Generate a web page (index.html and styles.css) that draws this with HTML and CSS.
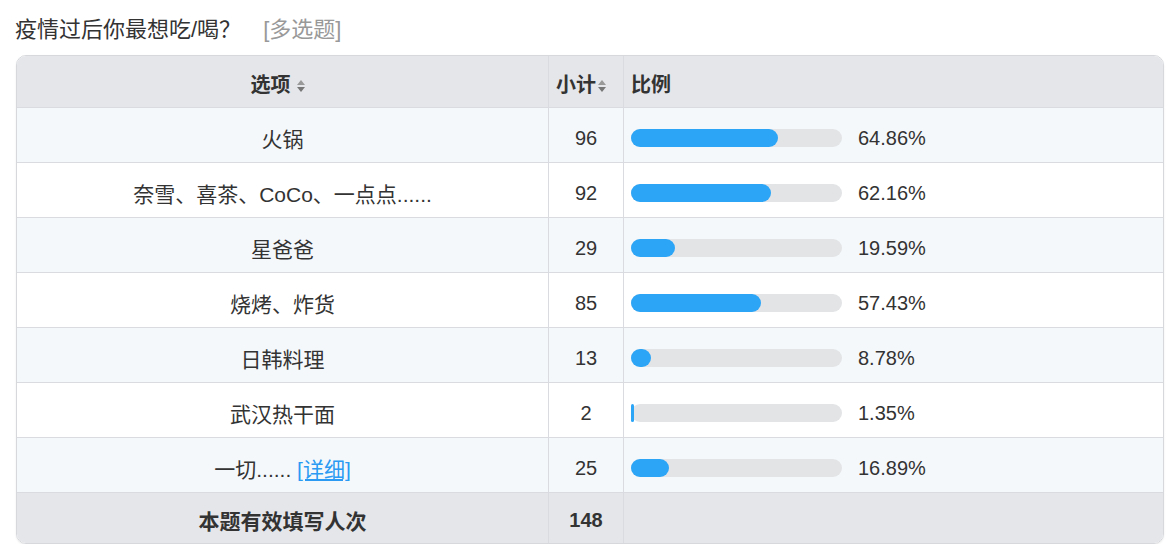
FILE: index.html
```html
<!DOCTYPE html>
<html lang="zh-CN">
<head>
    <meta charset="UTF-8">
    <title>疫情过后你最想吃/喝？</title>
    <link rel="stylesheet" href="styles.css">
</head>
<body>
    <div class="question">
        <div class="question-title">疫情过后你最想吃/喝？<span class="question-type">[多选题]</span></div>

        <div class="result-box">
            <table class="result-table">
                <thead>
                    <tr>
                        <th class="col-option">选项<span class="sort"></span></th>
                        <th class="col-count">小计<span class="sort"></span></th>
                        <th class="col-ratio">比例</th>
                    </tr>
                </thead>
                <tbody>
                    <tr>
                        <td class="opt">火锅</td>
                        <td class="num">96</td>
                        <td><div class="ratio"><div class="bar"><div class="fill" style="width: 147px"></div></div><span class="pct">64.86%</span></div></td>
                    </tr>
                    <tr>
                        <td class="opt">奈雪、喜茶、CoCo、一点点......</td>
                        <td class="num">92</td>
                        <td><div class="ratio"><div class="bar"><div class="fill" style="width: 140px"></div></div><span class="pct">62.16%</span></div></td>
                    </tr>
                    <tr>
                        <td class="opt">星爸爸</td>
                        <td class="num">29</td>
                        <td><div class="ratio"><div class="bar"><div class="fill" style="width: 44px"></div></div><span class="pct">19.59%</span></div></td>
                    </tr>
                    <tr>
                        <td class="opt">烧烤、炸货</td>
                        <td class="num">85</td>
                        <td><div class="ratio"><div class="bar"><div class="fill" style="width: 130px"></div></div><span class="pct">57.43%</span></div></td>
                    </tr>
                    <tr>
                        <td class="opt">日韩料理</td>
                        <td class="num">13</td>
                        <td><div class="ratio"><div class="bar"><div class="fill" style="width: 20px"></div></div><span class="pct">8.78%</span></div></td>
                    </tr>
                    <tr>
                        <td class="opt">武汉热干面</td>
                        <td class="num">2</td>
                        <td><div class="ratio"><div class="bar"><div class="fill" style="width: 3px"></div></div><span class="pct">1.35%</span></div></td>
                    </tr>
                    <tr>
                        <td class="opt">一切...... <a href="#">[详细]</a></td>
                        <td class="num">25</td>
                        <td><div class="ratio"><div class="bar"><div class="fill" style="width: 38px"></div></div><span class="pct">16.89%</span></div></td>
                    </tr>
                </tbody>
                <tfoot>
                    <tr>
                        <td class="opt">本题有效填写人次</td>
                        <td class="num">148</td>
                        <td></td>
                    </tr>
                </tfoot>
            </table>
        </div>
    </div>
</body>
</html>
```

FILE: styles.css
```css
/* Page base */
html, body {
    margin: 0;
    padding: 0;
    background: #fff;
    color: #333;
    font-family: "Liberation Sans", "Noto Sans CJK SC", sans-serif;
}

.question {
    padding: 15px 12px 0 15px;
}

.question-title {
    font-size: 22px;
    line-height: 30px;
    margin-bottom: 10px;
    color: #333;
}

.question-type {
    color: #999;
    margin-left: 22px;
}

/* Rounded box around the table */
.result-box {
    width: 1146px;
    margin-left: 1px;
    border: 1px solid #d6d8dc;
    border-radius: 10px;
    overflow: hidden;
    box-shadow: 0 1px 2px rgba(0, 0, 0, 0.08);
}

.result-table {
    width: 100%;
    border-collapse: collapse;
    font-size: 20px;
    color: #333;
}

.result-table th,
.result-table td {
    border-left: 1px solid #d9dbe0;
    border-top: 1px solid #d9dbe0;
    text-align: center;
    vertical-align: middle;
    padding: 0 7px;
}

.result-table th:first-child,
.result-table td:first-child {
    border-left: none;
}

.result-table thead th {
    border-top: none;
    height: 47px;
    background: #e4e6ea;
    font-weight: bold;
    padding-top: 4px;
}

.result-table tbody td {
    height: 48px;
    padding-top: 6px;
}

.result-table .opt {
    font-size: 21px;
}

.result-table tbody tr:nth-child(odd) td {
    background: #f5f8fb;
}

.result-table tbody tr:nth-child(even) td {
    background: #fff;
}

.result-table tfoot td {
    height: 46px;
    background: #e4e6ea;
    font-weight: bold;
    padding-top: 4px;
}

.col-option {
    width: 517px;
}

.col-option .sort {
    margin-right: 10px;
}

.result-table .col-count {
    width: 60px;
    text-align: left;
}

.result-table .col-ratio {
    text-align: left;
}

/* Sort arrows */
.sort {
    display: inline-block;
    position: relative;
    width: 9px;
    height: 16px;
    margin-left: 5px;
    vertical-align: -2px;
}

.sort::before,
.sort::after {
    content: "";
    position: absolute;
    left: 1px;
    border-left: 4px solid transparent;
    border-right: 4px solid transparent;
}

.sort::before {
    top: 2px;
    border-bottom: 5px solid #999;
}

.sort::after {
    top: 9px;
    border-top: 5px solid #777;
}

.col-count .sort {
    margin-left: 1px;
}

/* Ratio bar */
.ratio {
    display: flex;
    align-items: center;
}

.bar {
    width: 211px;
    height: 18px;
    border-radius: 9px;
    background: #e3e4e6;
    flex-shrink: 0;
}

.fill {
    height: 100%;
    background: #2ca5f7;
    border-radius: 9px;
}

.pct {
    margin-left: 16px;
}

.result-table a {
    color: #2a9af2;
    text-decoration: underline;
}
```
